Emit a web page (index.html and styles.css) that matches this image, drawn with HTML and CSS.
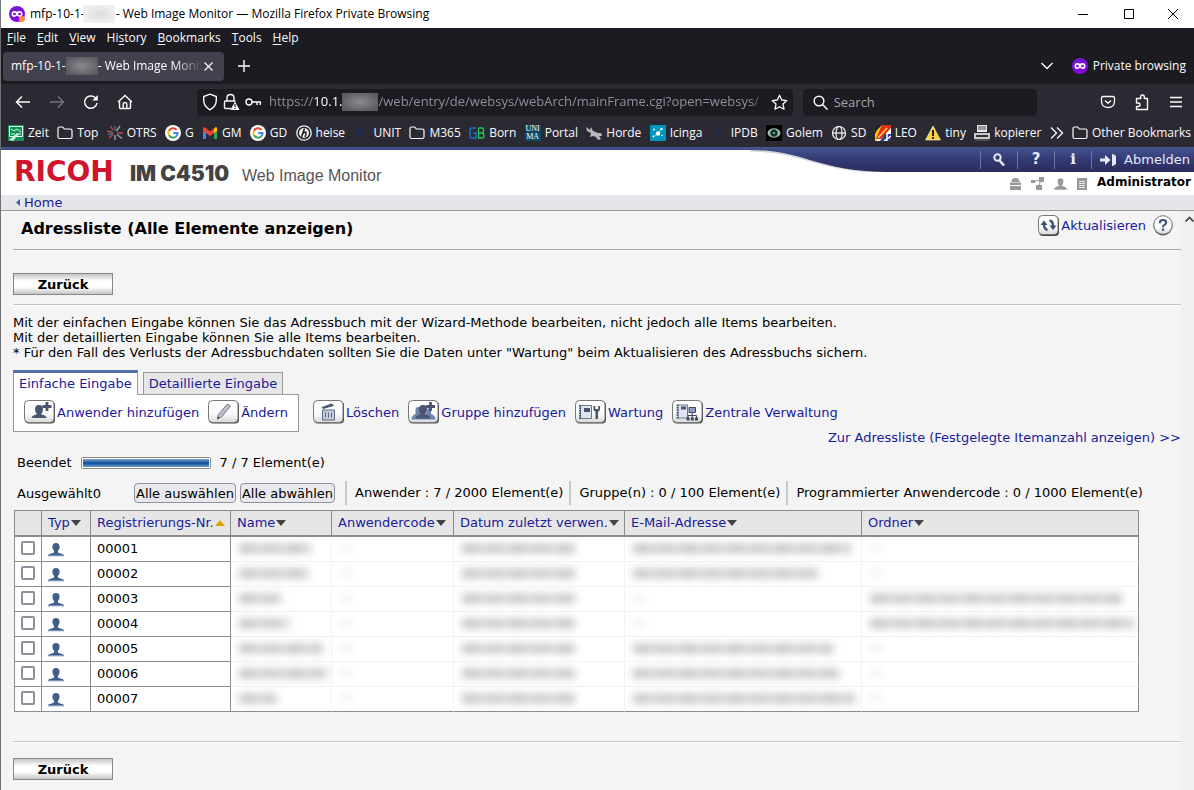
FILE: index.html
```html
<!DOCTYPE html>
<html lang="de">
<head>
<meta charset="utf-8">
<title>Web Image Monitor</title>
<link rel="stylesheet" href="styles.css">
</head>
<body>
<svg class="defs" aria-hidden="true">
  <defs>
    <linearGradient id="band" x1="0" y1="0" x2="0" y2="1"><stop offset="0" stop-color="#45558f"/><stop offset=".5" stop-color="#333a74"/><stop offset="1" stop-color="#2c2b5c"/></linearGradient>
    <linearGradient id="face" x1="0" y1="0" x2="0" y2="1"><stop offset="0" stop-color="#fff"/><stop offset=".6" stop-color="#fafafa"/><stop offset="1" stop-color="#d8d8d8"/></linearGradient>
    <linearGradient id="pbm" x1="0" y1="0" x2="1" y2="1"><stop offset="0" stop-color="#6b1fd6"/><stop offset="1" stop-color="#8f00e0"/></linearGradient>
  </defs>
  <symbol id="mask" viewBox="0 0 16 16"><circle cx="8" cy="8" r="8" fill="url(#pbm)"/><path d="M2.500 8q0-3 3-3 1.300 0 2.500.8Q9.200 5 10.500 5q3 0 3 3 0 3-2.700 3Q9.200 11 8 9.600 6.800 11 5.200 11q-2.700 0-2.700-3z" fill="#fff"/><path d="M4 8.200q.3-1.400 1.500-1.400T7 8.200q-.3 1-1.500 1T4 8.200zM9 8.200q.3-1.400 1.500-1.400T12 8.200q-.3 1-1.500 1T9 8.200z" fill="#7a0bd8"/></symbol>
  <symbol id="folder" viewBox="0 0 16 16"><path d="M1 3.500q0-1.500 1.500-1.500h3.200l1.600 2h6.200q1.500 0 1.500 1.500v6.500q0 1.500-1.500 1.500h-11Q1 13.500 1 12z" fill="none" stroke="#fbfbfe" stroke-width="1.200"/></symbol>
  <symbol id="google" viewBox="0 0 16 16"><circle cx="8" cy="8" r="8" fill="#fff"/><path d="M11.600 4.800A4.600 4.600 0 0 0 4 5.700" fill="none" stroke="#ea4335" stroke-width="2"/><path d="M4 5.700a4.600 4.600 0 0 0 0 4.600" fill="none" stroke="#fbbc05" stroke-width="2"/><path d="M4 10.300a4.600 4.600 0 0 0 7 1.200" fill="none" stroke="#34a853" stroke-width="2"/><path d="M8.200 8h4.400q0 2.200-1.600 3.500" fill="none" stroke="#4285f4" stroke-width="2"/></symbol>
  <symbol id="person" viewBox="0 0 16 14"><path d="M8 0q3.600 0 3.600 3.800 0 3-1.700 4.300v1.500Q12 10.800 15 11.200q1 .5 1 1.800H0q0-1.300 1-1.800 3-.4 5.100-1.600V8.100Q4.400 6.800 4.400 3.800 4.400 0 8 0z" fill="#3f5e8c"/><path d="M0 12h16v1.300H0z" fill="#7c93b8"/></symbol>
  <symbol id="key" viewBox="0 0 31 24"><rect x="1" y="1.500" width="30" height="22" rx="4" fill="#444"/><rect x=".5" y=".5" width="29.500" height="22" rx="4" fill="url(#face)" stroke="#777"/></symbol>
</svg>

<header class="browser">
  <div class="titlebar">
    <svg class="i16" viewBox="0 0 16 16" aria-hidden="true"><use href="#mask"/><circle cx="13" cy="13" r="3" fill="#ff8a3c"/></svg>
    <span>mfp-10-1-</span><span class="redact light"></span><span class="grow">- Web Image Monitor — Mozilla Firefox Private Browsing</span>
    <button class="win" aria-label="Minimize"><svg width="10" height="10"><path d="M0 5.500h10" stroke="#000"/></svg></button>
    <button class="win" aria-label="Maximize"><svg width="10" height="10"><path d="M.5.500h9v9h-9z" fill="none" stroke="#000"/></svg></button>
    <button class="win" aria-label="Close"><svg width="10" height="10"><path d="M0 0l10 10M10 0L0 10" stroke="#000"/></svg></button>
  </div>
  <nav class="menubar">
    <button><u>F</u>ile</button><button><u>E</u>dit</button><button><u>V</u>iew</button><button>Hi<u>s</u>tory</button><button><u>B</u>ookmarks</button><button><u>T</u>ools</button><button><u>H</u>elp</button>
  </nav>
  <div class="tabstrip">
    <div class="tab">
      <span>mfp-10-1-</span><span class="redact dark"></span><span class="tabtext">- Web Image Monit</span>
      <button aria-label="Close tab"><svg width="9" height="9"><path d="M.5.500l8 8M8.500.500l-8 8" stroke="#fbfbfe" stroke-width="1.100"/></svg></button>
    </div>
    <button class="newtab" aria-label="New tab"><svg width="12" height="12"><path d="M6 0v12M0 6h12" stroke="#fbfbfe" stroke-width="1.400"/></svg></button>
    <span class="grow"></span>
    <button class="alltabs" aria-label="List all tabs"><svg width="12" height="8"><path d="M.5 1L6 6.500 11.500 1" fill="none" stroke="#fbfbfe" stroke-width="1.400"/></svg></button>
    <svg class="i16" aria-hidden="true"><use href="#mask"/></svg>
    <span class="private">Private browsing</span>
  </div>
  <div class="toolbar">
    <button class="tb" aria-label="Back"><svg width="16" height="16"><path d="M15 8H2M7 2.500L1.500 8 7 13.500" fill="none" stroke="#fbfbfe" stroke-width="1.500"/></svg></button>
    <button class="tb" aria-label="Forward"><svg width="16" height="16"><path d="M1 8h13M9 2.500L14.500 8 9 13.500" fill="none" stroke="#74737c" stroke-width="1.500"/></svg></button>
    <button class="tb" aria-label="Reload"><svg width="16" height="16"><path d="M14 9a6.200 6.200 0 1 1-2-5.500l1.500 1.600" fill="none" stroke="#fbfbfe" stroke-width="1.500"/><path d="M14.800 1v5.500H9.300z" fill="#fbfbfe"/></svg></button>
    <button class="tb" aria-label="Home"><svg width="16" height="16"><path d="M1 8l7-6.500L15 8M2.500 7v6.500q0 1 1 1h9q1 0 1-1V7M6.200 14V9.800q0-1 1-1h1.600q1 0 1 1V14" fill="none" stroke="#fbfbfe" stroke-width="1.400"/></svg></button>
    <div class="urlbar">
      <svg width="16" height="18" viewBox="0 0 16 18"><path d="M8 1.200l6.300 2.300V7q0 6.500-6.300 9.800Q1.700 13.500 1.700 7V3.500z" fill="none" stroke="#fbfbfe" stroke-width="1.400"/></svg>
      <svg width="17" height="18" viewBox="0 0 17 18"><path d="M4 8V5q0-3.500 3.500-3.500T11 5v3M8 15.500H2.500q-1 0-1-1V9q0-1 1-1h10" fill="none" stroke="#fbfbfe" stroke-width="1.400"/><path d="M12 8.500l4.500 8.500h-9z" fill="#fbfbfe"/><path d="M12 11v3M12 15v1" stroke="#1c1b22" stroke-width="1.200"/></svg>
      <svg width="17" height="16" viewBox="0 0 17 16"><circle cx="4" cy="8" r="3" fill="none" stroke="#fbfbfe" stroke-width="1.400"/><path d="M7 8h9M12 8v3M15.300 8v3" stroke="#fbfbfe" stroke-width="1.400"/></svg>
      <div class="url">https://<b>10.1.</b><span class="redact dark"></span>/web/entry/de/websys/webArch/mainFrame.cgi?open=websys/</div>
      <button class="star" aria-label="Bookmark this page"><svg width="17" height="17" viewBox="0 0 17 17"><path d="M8.500 1.300l2.200 4.700 5.100.6-3.800 3.500 1 5.100-4.500-2.500-4.500 2.500 1-5.100L1.200 6.600 6.300 6z" fill="none" stroke="#fbfbfe" stroke-width="1.300" stroke-linejoin="round"/></svg></button>
    </div>
    <label class="search">
      <svg width="15" height="15" aria-hidden="true"><circle cx="6" cy="6" r="4.800" fill="none" stroke="#fbfbfe" stroke-width="1.500"/><path d="M9.500 9.500l5 5" stroke="#fbfbfe" stroke-width="1.500"/></svg>
      <input type="text" placeholder="Search" aria-label="Search">
    </label>
    <span class="grow"></span>
    <button class="tb" aria-label="Pocket"><svg width="16" height="16"><path d="M3 2.500h10q1.500 0 1.500 1.500v3q0 6.500-6.500 6.500T1.500 7V4Q1.500 2.500 3 2.500z" fill="none" stroke="#fbfbfe" stroke-width="1.300"/><path d="M5 6.500l3 2.800 3-2.800" fill="none" stroke="#fbfbfe" stroke-width="1.500"/></svg></button>
    <button class="tb" aria-label="Extensions"><svg width="16" height="18"><path d="M2.500 5.500h4.200V4q0-2 1.800-2t1.800 2v1.500h3.200v11h-11v-3H4q2 0 2-1.800T4 10H2.500z" fill="none" stroke="#fbfbfe" stroke-width="1.400" stroke-linejoin="round"/></svg></button>
    <button class="tb" aria-label="Menu"><svg width="14" height="12"><path d="M1 1.500h12M1 6h12M1 10.500h12" stroke="#fbfbfe" stroke-width="1.300"/></svg></button>
  </div>
  <nav class="bookmarks">
    <a href="#"><svg class="i16" viewBox="0 0 16 16"><path d="M0 0h16v16H0z" fill="#0f9158"/><path d="M1.500 1.500h13v10h-13z" fill="none" stroke="#e8fff2"/><path d="M3 4l3 2 3-2 4 3M3 9h4M9 9h4" stroke="#d6f5e4" fill="none"/><path d="M1 15l8-7 2 1-6 7z" fill="#cfeedd"/></svg>Zeit</a>
    <a href="#"><svg class="i16"><use href="#folder"/></svg>Top</a>
    <a href="#"><svg class="i16" viewBox="0 0 16 16" stroke-width="1.400"><path d="M9.500 6l3.500-5M10 9.500l5 4M8 10v5" stroke="#9b9ba4"/><path d="M6 5L3.500 1M6 7.500L0 6M6 9.500L2 13M10 8h6" stroke="#b54a4a"/><path d="M8 6V1M6.500 8.500L1 9.500" stroke="#436f86"/></svg>OTRS</a>
    <a href="#"><svg class="i16"><use href="#google"/></svg>G</a>
    <a href="#"><svg class="i16" viewBox="0 0 16 16"><path d="M1 3v11h3V6z" fill="#4285f4"/><path d="M15 3v11h-3V6z" fill="#34a853"/><path d="M1 2.800l1.500-.8L8 6.500 13.500 2l1.500.8V6l-7 5-7-5z" fill="#ea4335"/><path d="M12 4l2-2 1 1v3l-3 2z" fill="#fbbc05"/></svg>GM</a>
    <a href="#"><svg class="i16"><use href="#google"/></svg>GD</a>
    <a href="#"><svg class="i16" viewBox="0 0 16 16"><circle cx="8" cy="8" r="7.200" fill="#222" stroke="#f4f4f4" stroke-width="1.300"/><circle cx="8" cy="8" r="5" fill="#f4f4f4"/><path d="M8.500 3.500L5.500 12M6.500 9q3-3 3.500-1.500T9 12" fill="none" stroke="#222" stroke-width="1.600"/></svg>heise</a>
    <a href="#"><svg class="i16" viewBox="0 0 16 16"><path d="M3 6l5-3 2 2-1 6-5 1z" fill="#232a52"/></svg>UNIT</a>
    <a href="#"><svg class="i16"><use href="#folder"/></svg>M365</a>
    <a href="#"><svg class="i16" viewBox="0 0 16 16" fill="none" stroke-width="1.400"><path d="M7 3H3Q1 3 1 5v6q0 2 2 2h4V8H4" stroke="#1872c8"/><path d="M9.500 3v10H13q2 0 2-2.500T13 8H9.500M13 8q1.500 0 1.500-2.500T13 3H9.500" stroke="#1fc458"/></svg>Born</a>
    <a href="#"><span class="unima" aria-hidden="true">UNI<br>MA</span>Portal</a>
    <a href="#"><svg class="i16" viewBox="0 0 16 16"><path d="M0 2l4 3 1-3 2 4 5 2 3 0 1 3-3 0 2 3-3 1-2-3-3-1-3 1 1-4-4-2z" fill="#b9b9b9"/></svg>Horde</a>
    <a href="#"><svg class="i16" viewBox="0 0 16 16"><path d="M0 0h16v16H0z" fill="#0095bf"/><g fill="#fff"><circle cx="8" cy="8.500" r="2.200"/><circle cx="11.500" cy="4" r="1.200"/><circle cx="4" cy="4.500" r=".9"/><circle cx="3.500" cy="11.500" r=".9"/><circle cx="12" cy="10.500" r=".8"/></g><path d="M8 8.500L11.500 4M8 8.500l-4.500 3" stroke="#fff" stroke-width=".6"/></svg>Icinga</a>
    <a href="#"><svg class="i16" viewBox="0 0 16 16"><path d="M5 4l5 1v6l-4 2z" fill="#232a4c"/></svg>IPDB</a>
    <a href="#"><svg class="i16" viewBox="0 0 16 16"><path d="M0 0h16v16H0z" fill="#000"/><ellipse cx="8" cy="8" rx="6.500" ry="4.700" fill="#a9b8b0"/><circle cx="8" cy="8" r="3.600" fill="#10231d" stroke="#3b7a66"/><circle cx="8" cy="8" r="1.300" fill="#55b396"/></svg>Golem</a>
    <a href="#"><svg class="i16" viewBox="0 0 16 16" fill="none" stroke="#fbfbfe" stroke-width="1.200"><circle cx="8" cy="8" r="6.500"/><ellipse cx="8" cy="8" rx="3" ry="6.500"/><path d="M1.500 8h13"/></svg>SD</a>
    <a href="#"><svg class="i16" viewBox="0 0 16 16"><path d="M0 0h16v16H0z" fill="#fff"/><path d="M0 0h11L1 16H0z" fill="#f6c800"/><path d="M0 0h7L2 5 0 9z" fill="#222"/><path d="M7 0h9v3L6 14H1l2-5z" fill="#dd2b1e"/><path d="M10 9h6v7H5z" fill="#2b3d8f"/><path d="M9 16l7-5M12 9v7" stroke="#fff" stroke-width="1.500"/><path d="M3 13l9-10" stroke="#ffe14a" stroke-width="1.400"/></svg>LEO</a>
    <a href="#"><svg class="i16" viewBox="0 0 16 16"><path d="M8 1l7.500 14H.5z" fill="#ffd23c" stroke="#ede7cf" stroke-width=".7"/><path d="M8 5v6M8 12v2" stroke="#111" stroke-width="1.800"/></svg>tiny</a>
    <a href="#"><svg class="i16" viewBox="0 0 16 16"><path d="M3 0h10v7H3z" fill="#e8e8e8"/><path d="M4 2h8M4 4h8" stroke="#444"/><path d="M0 8h16v6H0z" fill="#c9c9c9"/><path d="M2 10h12v2H2z" fill="#333"/><path d="M1 15h14" stroke="#777"/></svg>kopierer</a>
    <button class="more" aria-label="More bookmarks"><svg width="14" height="12"><path d="M1 .500L6.500 6 1 11.500M7 .500L12.500 6 7 11.500" fill="none" stroke="#fbfbfe" stroke-width="1.300"/></svg></button>
    <a href="#"><svg class="i16"><use href="#folder"/></svg>Other Bookmarks</a>
  </nav>
</header>

<header class="device">
  <div class="brand"><span class="ricoh">RICOH</span><span class="model">IM C4510</span><span class="wim">Web Image Monitor</span></div>
  <div class="account">
    <div class="band">
      <svg class="curve" viewBox="0 0 150 25" preserveAspectRatio="none" aria-hidden="true"><path d="M10 3.500C64 3.500 76 24.500 148 25" fill="none" stroke="#d4d4da" stroke-width="2"/><path d="M0 0h150v25h-6C76 24 64 3 10 3H0z" fill="url(#band)"/></svg>
      <div class="bandnav">
        <a href="#" aria-label="Suche"><svg width="14" height="14"><circle cx="5.500" cy="4.500" r="3.200" fill="none" stroke="#e6eaf8" stroke-width="2"/><path d="M7.500 7.500l4.500 5" stroke="#e6eaf8" stroke-width="2.600"/></svg></a>
        <a href="#" class="glyph">?</a>
        <a href="#" class="glyph serif">i</a>
        <a href="#" class="logout"><svg width="16" height="12" aria-hidden="true"><path d="M0 4.500h5V1l5.500 5L5 11V7.500H0z" fill="#e6eaf8"/><path d="M12 0h1l3 2v8l-3 2h-1z" fill="#e6eaf8"/></svg>Abmelden</a>
      </div>
    </div>
    <div class="role">
      <svg width="11" height="12"><path d="M1.500 4Q1.500 0 5.500 0t4 4zM0 4.500h11V7H0zM0 8h11v4H0z" fill="#999"/></svg>
      <svg width="13" height="13"><path d="M8 0h5v5H8zM0 3h4v3H0zM5 8h6v5H5z" fill="#999"/><path d="M3 4.500l6-1.500M9.500 4L8 9" stroke="#999"/></svg>
      <svg width="13" height="12" viewBox="0 0 16 14"><path d="M8 0q3.600 0 3.600 3.800 0 3-1.700 4.300v1.500Q16 10.800 16 14H0q0-3.200 6.100-4.400V8.100Q4.400 6.800 4.400 3.800 4.400 0 8 0z" fill="#999"/></svg>
      <svg width="10" height="12"><path d="M0 0h10v12H0z" fill="#999"/><path d="M2 3.500h6M2 5.500h6M2 7.500h6M2 9.500h6" stroke="#fff" stroke-width=".8"/></svg>
      <strong>Administrator</strong>
    </div>
  </div>
</header>
<nav class="crumb"><a href="#"><svg width="4" height="7" aria-hidden="true"><path d="M4 0v7L0 3.500z" fill="#4a5aa5"/></svg>Home</a></nav>

<div class="frame">
<main>
  <div class="pagehead">
    <h1>Adressliste (Alle Elemente anzeigen)</h1>
    <a href="#" class="refresh"><svg width="21" height="21" aria-hidden="true"><rect x="1" y="1.500" width="20" height="19.500" rx="4" fill="#444"/><rect x=".5" y=".5" width="19.500" height="19" rx="4" fill="url(#face)" stroke="#777"/><path d="M9.500 15Q6 14 6 9.500M11.500 5.500Q15 6 15 11" fill="none" stroke="#3d4f73" stroke-width="2.400"/><path d="M2.500 10L6 5.500 9.500 10zM11.500 10.500h7L15 15z" fill="#3d4f73"/></svg>Aktualisieren</a>
    <a href="#" aria-label="Hilfe"><svg width="20" height="21" aria-hidden="true"><circle cx="10" cy="10.800" r="9.600" fill="#444"/><circle cx="10" cy="10" r="9.300" fill="url(#face)" stroke="#777"/><path d="M6.800 8.200q0-3.200 3.200-3.200t3.200 2.600q0 1.300-1.700 2.300-1.500.8-1.500 2.300M10 13.500v2.300" fill="none" stroke="#3d4f73" stroke-width="2.200"/></svg></a>
  </div>
  <button class="back">Zurück</button>
  <hr>
  <p class="intro">Mit der einfachen Eingabe können Sie das Adressbuch mit der Wizard-Methode bearbeiten, nicht jedoch alle Items bearbeiten.<br>Mit der detaillierten Eingabe können Sie alle Items bearbeiten.<br>* Für den Fall des Verlusts der Adressbuchdaten sollten Sie die Daten unter "Wartung" beim Aktualisieren des Adressbuchs sichern.</p>
  <div class="modes"><a href="#" class="mode active">Einfache Eingabe</a><a href="#" class="mode">Detaillierte Eingabe</a></div>
  <div class="actions">
    <div class="panel">
      <a href="#"><svg class="key" viewBox="0 0 31 24"><use href="#key"/><path d="M15 5q4 0 4 4 0 3-1.500 4.300v1.200q4.500.8 5 3.500H7.500q.5-2.700 5-3.500v-1.200Q11 12 11 9q0-4 4-4z" fill="#4a5670"/><path d="M23 2v9M18.500 6.500h9" stroke="#4a5670" stroke-width="2.800"/></svg>Anwender hinzufügen</a>
      <a href="#"><svg class="key" viewBox="0 0 31 24"><use href="#key"/><path d="M19.500 4l3 2-9 11-4 2 .800-4.500z" fill="#b9c0cc" stroke="#6b7484" stroke-width=".9"/><path d="M9.300 19l.8-2.500 1.500 1.200z" fill="#333"/></svg>Ändern</a>
    </div>
    <a href="#"><svg class="key" viewBox="0 0 31 24"><use href="#key"/><path d="M9.500 10h12v10h-12z" fill="#c5ccda" stroke="#5c6a86"/><path d="M12.500 12.500v5M15.500 12.500v5M18.500 12.500v5" stroke="#5c6a86"/><path d="M9 7.500l9.500-3.500 2 1.500-10.500 3z" fill="#4a5670" stroke="#4a5670"/></svg>Löschen</a>
    <a href="#"><svg class="key" viewBox="0 0 31 24"><use href="#key"/><path d="M10 7q3 0 3 3v4q4 1 4 5.500H3.500Q4 15 7.500 14v-4Q7.500 7 10 7zM20 8q3 0 3 3v3q4 1 4.500 5.500H16z" fill="#6f82b0"/><path d="M15 5q4 0 4 4 0 3-1.500 4.300v1.200q4.500.8 5 4H7.500q.5-3.200 5-4v-1.200Q11 12 11 9q0-4 4-4z" fill="#4a5670"/><path d="M22.500 2v9M18 6.500h9" stroke="#4a5670" stroke-width="2.800"/></svg>Gruppe hinzufügen</a>
    <a href="#"><svg class="key" viewBox="0 0 31 24"><use href="#key"/><path d="M5.500 5.500h11v13h-11z" fill="#dfe4f0" stroke="#6a7690"/><path d="M9 8h6v4H9z" fill="#4a5670"/><path d="M5 5v14" stroke="#4a5670" stroke-width="2" stroke-dasharray="1.500 1"/><path d="M18.500 6v3q0 2 2 2.700V19h2.500v-7.300q2-.7 2-2.700V6h-1.800v3h-2.900V6z" fill="#4a5670"/></svg>Wartung</a>
    <a href="#"><svg class="key" viewBox="0 0 31 24"><use href="#key"/><path d="M6 5h9.500v13H6z" fill="#dfe4f0" stroke="#6a7690"/><path d="M9 6.500h5v3H9z" fill="#4a5670"/><path d="M5.500 4.500v14" stroke="#4a5670" stroke-width="2" stroke-dasharray="1.500 1"/><path d="M17 7.500h6.500v5H17z" fill="#8ea0c0" stroke="#3f4a62"/><path d="M20.200 13v5M16 18v-2.500h8.500V18" fill="none" stroke="#3f4a62"/><path d="M14.500 17.500h3v3h-3zM18.800 17.500h3v3h-3zM23 17.500h3v3h-3z" fill="#3f4a62"/></svg>Zentrale Verwaltung</a>
  </div>
  <a href="#" class="fixedlist">Zur Adressliste (Festgelegte Itemanzahl anzeigen) &gt;&gt;</a>
  <div class="status"><label for="load">Beendet</label><progress id="load" value="7" max="7"></progress><span>7 / 7 Element(e)</span></div>
  <div class="counts">
    <span class="chosen">Ausgewählt0</span><button>Alle auswählen</button><button>Alle abwählen</button>
    <span class="count">Anwender : 7 / 2000 Element(e)</span><span class="count">Gruppe(n) : 0 / 100 Element(e)</span><span class="count">Programmierter Anwendercode : 0 / 1000 Element(e)</span>
  </div>
  <div class="list">
    <table>
      <colgroup><col class="c-check"><col class="c-type"><col class="c-reg"><col class="c-name"><col class="c-code"><col class="c-date"><col class="c-mail"><col></colgroup>
      <thead><tr><th></th><th><a href="#" class="sort">Typ</a></th><th><a href="#" class="sort up">Registrierungs-Nr.</a></th><th><a href="#" class="sort">Name</a></th><th><a href="#" class="sort">Anwendercode</a></th><th><a href="#" class="sort">Datum zuletzt verwen.</a></th><th><a href="#" class="sort">E-Mail-Adresse</a></th><th><a href="#" class="sort">Ordner</a></th></tr></thead>
      <tbody id="rows"></tbody>
    </table>
  </div>
  <hr>
  <button class="back">Zurück</button>
</main>
<div class="scroll" aria-hidden="true"><svg width="9" height="6"><path d="M.5 5.500l4-4 4 4" fill="none" stroke="#505050" stroke-width="1.800"/></svg></div>
</div>
<script src="rows.js"></script>
</body>
</html>
```

FILE: styles.css
```css
* { box-sizing: border-box; }
body { margin: 0; min-height: 100vh; display: flex; flex-direction: column; border-left: 1px solid #6f7173; background: #f4f4f4; font: 13px/15px "DejaVu Sans", Verdana, sans-serif; color: #000; overflow-x: hidden; }
button, input { font: inherit; color: inherit; border: 0; background: none; padding: 0; margin: 0; }
a { color: #1a1a9a; text-decoration: none; }
svg { display: block; flex: none; }
.defs { position: absolute; width: 0; height: 0; }
.grow { flex: 1; }
.i16 { width: 16px; height: 16px; }

/* browser window */
.browser { font: 12px/16px "Open Sans", "Noto Sans", sans-serif; color: #fbfbfe; background: #1c1b22; white-space: nowrap; }
.browser button { display: flex; align-items: center; justify-content: center; }
.redact { display: inline-block; width: 32px; height: 18px; flex: none; vertical-align: middle; }
.redact.light { background: radial-gradient(ellipse, #dcdcdc, #f0f0f0 75%); margin: 0 1px 0 -2px; }
.redact.dark { background: radial-gradient(ellipse, #8a8a8e, #5c5b62 80%); }
.titlebar { height: 28px; background: #fff; color: #000; display: flex; align-items: center; padding-left: 8px; }
.titlebar .i16 { margin-right: 5px; }
.titlebar .win { width: 46px; height: 28px; }
.titlebar .win:last-child { width: 42px; }
.menubar { height: 20px; display: flex; align-items: center; gap: 11px; padding-left: 6px; }
.menubar u { text-underline-offset: 2px; }
.tabstrip { height: 36px; display: flex; align-items: center; padding: 0 8px 0 2px; }
.tab { width: 221px; height: 29px; border-radius: 4px; background: #42414d; display: flex; align-items: center; padding: 0 11px 0 8px; }
.tabtext { flex: 1; overflow: hidden; margin-right: 2px; -webkit-mask-image: linear-gradient(to left, transparent, #000 28px); mask-image: linear-gradient(to left, transparent, #000 28px); }
.newtab { width: 40px; height: 28px; }
.alltabs { width: 34px; margin-right: 8px; }
.private { margin-left: 5px; }
.toolbar { height: 36px; background: #2b2a33; display: flex; align-items: center; padding: 0 1px 0 5px; }
.tb { width: 34px; height: 28px; }
.urlbar, .search { height: 27px; border-radius: 4px; background: #1c1b22; display: flex; align-items: center; font-size: 13px; }
.urlbar { flex: 585 1 0; min-width: 0; margin-left: 55px; padding: 0 5px; gap: 5px; }
.url { flex: 1; overflow: hidden; color: #8f8f9a; margin-left: 2px; -webkit-mask-image: linear-gradient(to left, transparent, #000 16px); mask-image: linear-gradient(to left, transparent, #000 16px); }
.url b { color: #fbfbfe; font-weight: 400; }
.url .redact { width: 36px; }
.search { flex: 224 1 0; margin-left: 10px; padding-left: 10px; gap: 6px; }
.search input { width: 100%; }
.search input::placeholder { color: #a3a3ab; opacity: 1; }
.toolbar .grow { flex: 54 1 0; }
.bookmarks { height: 27px; background: #2b2a33; display: flex; align-items: center; justify-content: space-between; padding: 0 3px 2px 7px; }
.bookmarks a { color: #fbfbfe; display: flex; align-items: center; gap: 4px; }
.unima { width: 16px; height: 16px; background: #0b4a66; color: #fff; font: 8px/8px "Liberation Serif", serif; text-align: center; }

/* device header */
.device { display: flex; height: 48px; background: linear-gradient(#45558f, #3c4a84) top / 100% 3px no-repeat #fff; }
.brand { flex: 1; display: flex; align-items: baseline; padding: 10px 0 0 13px; color: #434343; }
.ricoh { font: 700 28px/30px "DejaVu Sans", sans-serif; color: #cf142b; width: 116px; }
.model { font: 900 21px/30px Inter, sans-serif; width: 112px; }
.wim { font: 16px/30px "Liberation Sans", Arial, sans-serif; color: #555; }
.account { width: 454px; }
.band { display: flex; height: 25px; }
.curve { width: 150px; height: 25px; }
.bandnav { flex: 1; display: flex; justify-content: flex-end; align-items: center; background: linear-gradient(#45558f, #333a74 50%, #2c2b5c); }
.bandnav a { width: 37px; height: 18px; display: flex; align-items: center; justify-content: center; color: #e6eaf8; border-left: 1px solid #6d75a0; }
.bandnav .glyph { font-weight: 700; font-size: 15px; }
.bandnav .serif { font-family: "DejaVu Serif", serif; }
.bandnav .logout { width: 103px; justify-content: flex-end; gap: 8px; padding-right: 4px; }
.role { height: 23px; display: flex; align-items: center; justify-content: flex-end; gap: 10px; padding-right: 3px; font-size: 12px; }
.role strong { padding-bottom: 2px; }
.crumb { height: 16px; background: #e5e6ea; border-bottom: 1px solid #999; padding-left: 15px; }
.crumb a { display: flex; align-items: center; height: 14px; gap: 4px; }

/* content frame */
.frame { flex: 1; display: flex; }
main { flex: 1; min-width: 0; padding: 0 0 10px 12px; }
.scroll { width: 13px; background: #f0f0f0; padding: 5px 0 0 4px; overflow: hidden; }
.pagehead { height: 39px; display: flex; align-items: center; gap: 7px; padding: 0 8px 9px; border-bottom: 1px solid #aaa; margin-bottom: 23px; }
h1 { flex: 1; margin: 0; padding-top: 6px; font-size: 16px; line-height: 20px; }
.refresh { display: flex; align-items: center; gap: 2px; }
hr { border: 0; border-top: 1px solid #c4c4c4; border-bottom: 1px solid #fff; margin: 0; }
.back { display: block; width: 100px; height: 22px; border: 1px solid #888; background: linear-gradient(#c4c4c4, #fff 35%, #fff 65%, #c4c4c4); font-weight: 700; }
.back + hr { margin-top: 9px; }
hr + .back { margin-top: 15px; }
.intro { margin: 9px 0 10px; }
.modes { display: flex; align-items: flex-end; gap: 5px; }
.mode { border: 1px solid #999; border-bottom: 0; background: #e6e6e6; height: 22px; padding: 3px 5px 0; }
.mode.active { position: relative; z-index: 1; height: 25px; margin-bottom: -1px; background: #fff; border-top: 3px solid #4f6fa8; }
.actions { display: flex; align-items: center; gap: 9px; }
.actions a { display: flex; align-items: center; gap: 2px; white-space: nowrap; }
.panel { display: flex; align-items: center; gap: 9px; height: 38px; background: #fff; border: 1px solid #999; padding: 0 10px 2px 10px; margin-right: 5px; }
.actions > a { padding-bottom: 2px; }
.key { width: 31px; height: 24px; }
.fixedlist { display: block; text-align: right; margin: -2px 0 10px; }
.status { display: flex; align-items: center; padding-left: 4px; gap: 9px; }
progress { appearance: none; width: 130px; height: 12px; border: 1px solid #888; border-radius: 2px; background: #fff; }
progress::-webkit-progress-bar { background: #fff; padding: 1px; }
progress::-webkit-progress-value { background: linear-gradient(#86a9cf, #0a4c97 50%, #6f9ac6); }
.counts { display: flex; align-items: center; height: 24px; margin: 11px 0 5px; padding-left: 4px; gap: 4px; white-space: nowrap; }
.chosen { width: 113px; }
.counts button { height: 20px; padding: 0 1px; border: 1px solid #8f8f9d; border-radius: 4px; background: #e9e9ed; }
.count { border-left: 2px solid #c8c8c8; line-height: 24px; padding: 0 2px 0 8px; }
.chosen ~ button + .count { margin-left: 6px; }
.list { padding: 0 42px 29px 1px; }
table { width: 100%; table-layout: fixed; border-spacing: 0; border-top: 1px solid #8c8c8c; border-left: 1px solid #8c8c8c; background: #fff; }
.c-check { width: 27px; } .c-type { width: 49px; } .c-reg { width: 140px; } .c-name { width: 101px; } .c-code { width: 122px; } .c-date { width: 171px; } .c-mail { width: 237px; }
th, td { height: 25px; padding: 0 6px 2px; border: 0 solid #8c8c8c; border-width: 0 1px 1px 0; text-align: left; font-weight: 400; white-space: nowrap; }
th { height: 26px; background: #e6e6e6; border-bottom-width: 2px; }
.sort { display: flex; align-items: center; gap: 1px; }
.sort::after { content: ""; border: 5px solid transparent; border-top: 6px solid #444; border-bottom: 0; margin-top: 2px; }
.sort.up::after { border-top: 0; border-bottom: 6px solid #d9a400; }
td input { appearance: none; display: block; width: 14px; height: 14px; border: 2px solid #8f8f9d; border-radius: 2px; background: #fff; }
td .person { width: 16px; height: 14px; margin-top: 4px; }
.hidden { border-color: #f3f3f3; padding-left: 8px; }
.hidden:last-child { border-right-color: #8c8c8c; }
tr:last-child .hidden { border-bottom-color: #8c8c8c; }
tr:first-child .hidden:not(:last-child) { background: linear-gradient(#8c8c8c, #8c8c8c) top right / 1px 3px no-repeat; background-origin: border-box; }
tr:last-child .hidden:not(:last-child) { background: linear-gradient(#8c8c8c, #8c8c8c) bottom right / 1px 3px no-repeat; background-origin: border-box; }
.smudge { display: block; height: 9px; filter: blur(4px); background: repeating-linear-gradient(90deg, #bec0be 0 17px, #dadbda 17px 21px, #c4c6c4 21px 43px, #e0e0e0 43px 47px); }
.smudge.faint { height: 4px; background: #e4e4e4; }
```

FILE: rows.js
```js
// Widths of the masked values per row: name, code, date, mail, folder.
const rows = [
  [72, 12, 114, 218, 12],
  [70, 12, 114, 186, 12],
  [42, 12, 114, 12, 252],
  [50, 12, 114, 12, 264],
  [84, 12, 114, 200, 12],
  [88, 12, 114, 206, 12],
  [38, 12, 114, 222, 12]
];
const mask = w => `<td class="hidden"><span class="smudge${w < 20 ? " faint" : ""}" style="width:${w}px"></span></td>`;
document.getElementById("rows").innerHTML = rows.map((r, i) => {
  const id = String(i + 1).padStart(5, "0");
  return `<tr><td><input type="checkbox" aria-label="${id}"></td><td><svg class="person"><use href="#person"/></svg></td><td>${id}</td>${r.map(mask).join("")}</tr>`;
}).join("");
```
